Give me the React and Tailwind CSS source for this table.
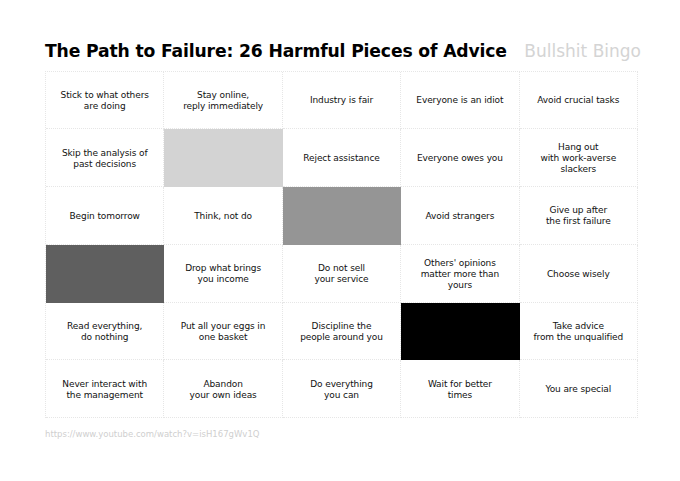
import React from "react";

const cells = [
  ["Stick to what others", "are doing"],
  ["Stay online,", "reply immediately"],
  ["Industry is fair"],
  ["Everyone is an idiot"],
  ["Avoid crucial tasks"],
  ["Skip the analysis of", "past decisions"],
  { fill: "bg-[#d3d3d3]" },
  ["Reject assistance"],
  ["Everyone owes you"],
  ["Hang out", "with work-averse", "slackers"],
  ["Begin tomorrow"],
  ["Think, not do"],
  { fill: "bg-[#959595]" },
  ["Avoid strangers"],
  ["Give up after", "the first failure"],
  { fill: "bg-[#5f5f5f]" },
  ["Drop what brings", "you income"],
  ["Do not sell", "your service"],
  ["Others' opinions", "matter more than", "yours"],
  ["Choose wisely"],
  ["Read everything,", "do nothing"],
  ["Put all your eggs in", "one basket"],
  ["Discipline the", "people around you"],
  { fill: "bg-black" },
  ["Take advice", "from the unqualified"],
  ["Never interact with", "the management"],
  ["Abandon", "your own ideas"],
  ["Do everything", "you can"],
  ["Wait for better", "times"],
  ["You are special"],
];

export default function App() {
  return (
    <div className="w-[680px] h-[481px] bg-white pl-[45px] pt-[38px] font-['DejaVu_Sans',Verdana,sans-serif]">
      {/* Header */}
      <div className="flex items-baseline w-[596px] justify-between">
        <h1 className="text-[17.2px] font-bold text-black tracking-[-0.15px] leading-[26px]">
          The Path to Failure: 26 Harmful Pieces of Advice
        </h1>
        <span className="text-[17px] text-[#d4d4d4]">Bullshit Bingo</span>
      </div>

      {/* Board */}
      <div className="mt-[6px] grid grid-cols-5 w-[593px] border-t border-l border-dotted border-[#e6e6e6]">
        {cells.map((c, i) =>
          Array.isArray(c) ? (
            <div
              key={i}
              className="h-[57.8px] pt-[2px] flex flex-col items-center justify-center text-center text-[9px] tracking-[-0.1px] leading-[11px] text-[#111] border-r border-b border-dotted border-[#e6e6e6]"
            >
              {c.map((line, j) => (
                <span key={j}>{line}</span>
              ))}
            </div>
          ) : (
            <div key={i} className={`h-[57.8px] ${c.fill}`} />
          )
        )}
      </div>

      <div className="mt-[10px] text-[8.5px] text-[#cfcfcf]">
        https://www.youtube.com/watch?v=isH167gWv1Q
      </div>
    </div>
  );
}
